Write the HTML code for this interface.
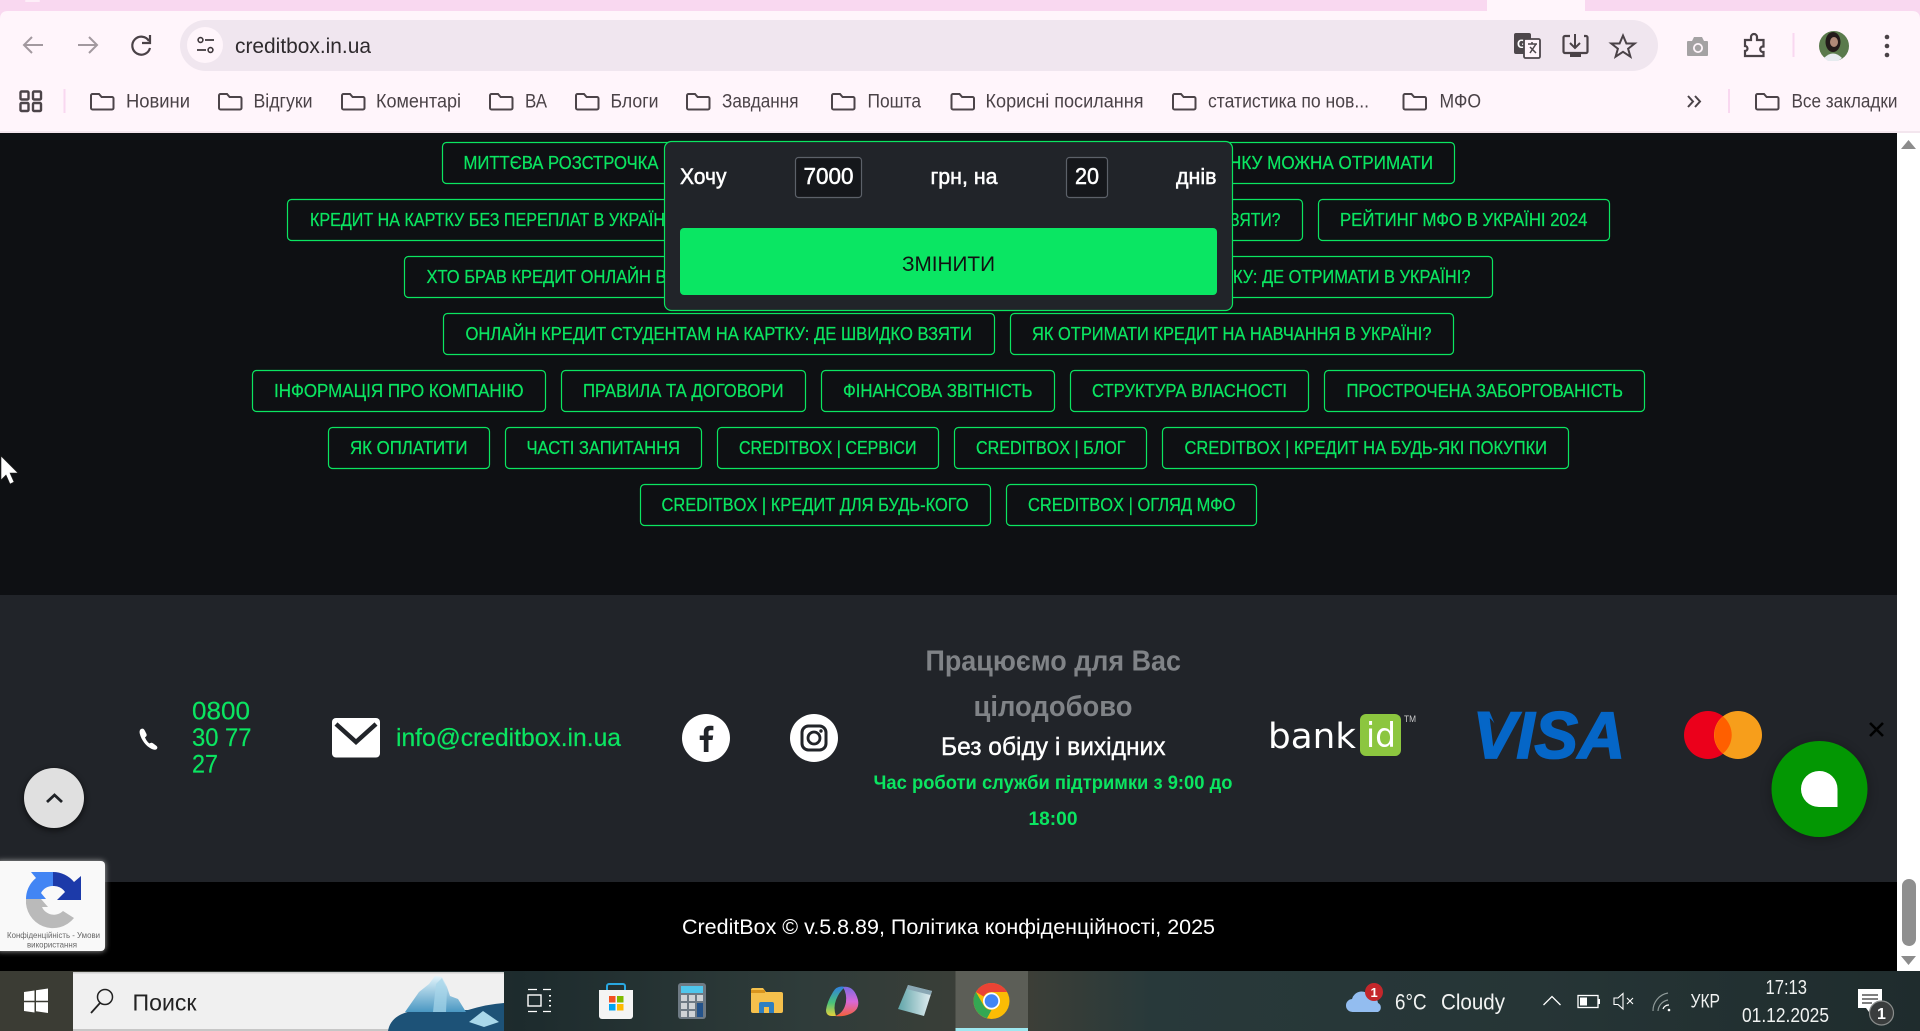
<!DOCTYPE html>
<html lang="uk"><head><meta charset="utf-8"><title>CreditBox</title>
<style>
html,body{margin:0;padding:0;width:1920px;height:1031px;overflow:hidden;background:#0e1013}
svg{display:block;position:absolute;left:0;top:0}
text{font-family:"Liberation Sans","Noto Sans CJK SC",sans-serif;white-space:pre}
.g{fill:#0be561;font-size:18px;stroke:#0be561;stroke-width:.25px}
.b{fill:#0e1013;stroke:#0be561;stroke-width:1.2px}
.m{fill:#4a4247;font-size:19px}
.w{fill:#fff}
.t{fill:#f1f3f2}
.fo{fill:none;stroke:#4c4449;stroke-width:2}
</style></head><body>
<svg width="1920" height="1031" viewBox="0 0 1920 1031" xmlns="http://www.w3.org/2000/svg">
<defs>
<path id="f" d="M2.5 1H9l2.6 3H22a1.5 1.5 0 0 1 1.5 1.5V15a1.5 1.5 0 0 1-1.5 1.5H2.5A1.5 1.5 0 0 1 1 15V2.5A1.5 1.5 0 0 1 2.5 1Z"/>
<linearGradient id="tb" x1="0" x2="1" y1="0" y2="0">
<stop offset="0" stop-color="#3b3c34"/><stop offset=".038" stop-color="#3b3c34"/><stop offset=".27" stop-color="#1d2b2d"/><stop offset=".42" stop-color="#2f3c3a"/><stop offset=".53" stop-color="#3e3f37"/><stop offset=".6" stop-color="#28393a"/><stop offset=".8" stop-color="#263536"/><stop offset="1" stop-color="#1f2c2d"/>
</linearGradient>
<filter id="sh" x="-40%" y="-40%" width="180%" height="180%"><feGaussianBlur stdDeviation="5"/></filter>
<filter id="sh2" x="-40%" y="-40%" width="180%" height="180%"><feGaussianBlur stdDeviation="3"/></filter>
<linearGradient id="ice" x1="0" x2="0" y1="0" y2="1"><stop offset="0" stop-color="#e2f4fb"/><stop offset="1" stop-color="#4a97c2"/></linearGradient>
<linearGradient id="cl" x1="0" x2="0" y1="0" y2="1"><stop offset="0" stop-color="#2f7fe0"/><stop offset=".55" stop-color="#49c27a"/><stop offset="1" stop-color="#e6d23c"/></linearGradient>
<linearGradient id="cr" x1="0" x2="0" y1="0" y2="1"><stop offset="0" stop-color="#7a6be0"/><stop offset=".5" stop-color="#d868d8"/><stop offset="1" stop-color="#f4603a"/></linearGradient>
<linearGradient id="np" x1="0" x2="1" y1="0" y2="0"><stop offset="0" stop-color="#5fa4a8"/><stop offset="1" stop-color="#e4eef2"/></linearGradient>
</defs>

<!-- browser chrome -->
<rect width="1920" height="133" fill="#fff5fb"/>
<rect width="1920" height="11" fill="#f9d8f0"/>
<rect x="1487" y="0" width="98" height="11" fill="#fff5fb"/>
<path d="M1477 11q10 0 10-11v11ZM1595 11q-10 0-10-11v11Z" fill="#f9d8f0"/>
<path d="M0 11h8q-8 0-8 8ZM1920 11h-8q8 0 8 8Z" fill="#f9d8f0"/>
<rect x="25" y="0" width="15" height="2" rx="1" fill="#fdeef8"/>
<rect x="0" y="131" width="1920" height="2" fill="#f3e6ee"/>
<rect x="180" y="20" width="1478" height="51" rx="25.5" fill="#f0e6ef"/>
<path d="M43 45H24M32 37l-8 8 8 8" fill="none" stroke="#a2999f" stroke-width="2"/>
<path d="M78 45h19M89 37l8 8-8 8" fill="none" stroke="#a2999f" stroke-width="2"/>
<path d="M149 41a9 9 0 1 0 1 7M150 35v8h-8" fill="none" stroke="#4a4247" stroke-width="2.2"/>
<circle cx="205" cy="45" r="18" fill="#fff5fb"/>
<circle cx="200.500" cy="40" r="2.400" fill="none" stroke="#3f383c" stroke-width="1.600"/><path d="M205 40h9M197 50h9" stroke="#3f383c" stroke-width="1.800"/><circle cx="210.500" cy="50" r="2.400" fill="none" stroke="#3f383c" stroke-width="1.600"/>
<text x="235" y="53" font-size="21" fill="#2e2a2d" textLength="136" lengthAdjust="spacingAndGlyphs">creditbox.in.ua</text>
<!-- right omnibox icons -->
<rect x="1514" y="33" width="17" height="21" rx="2" fill="#4d474b"/><text x="1517" y="48" font-size="12" font-weight="bold" fill="#fff">G</text>
<rect x="1524" y="39" width="16" height="19" rx="1.500" fill="#fff5fb" stroke="#4d474b" stroke-width="1.800"/><path d="M1528 44h9M1532 42v2M1536 44l-6 9M1530 47l6 6" stroke="#4d474b" stroke-width="1.500" fill="none"/>
<path d="M1570 36h-5a1.500 1.500 0 0 0-1.500 1.500v14a1.500 1.500 0 0 0 1.500 1.500h21a1.500 1.500 0 0 0 1.500-1.500V37.500a1.500 1.500 0 0 0-1.500-1.500h-2" fill="none" stroke="#4a4247" stroke-width="2.200"/><path d="M1575 34v13M1570 43l5 5 5-5" fill="none" stroke="#4a4247" stroke-width="2"/><path d="M1570 53h11v4h-11Z" fill="#4a4247"/>
<path d="M1623 35.500l3.400 8h8.300l-6.600 5.200 2.300 8-7.400-4.900-7.400 4.900 2.300-8-6.600-5.200h8.300Z" fill="none" stroke="#4a4247" stroke-width="2"/>
<path d="M1688 41h4l2-4h8l2 4h3a1 1 0 0 1 1 1v13a1 1 0 0 1-1 1h-19a1 1 0 0 1-1-1V42a1 1 0 0 1 1-1Z" fill="#a4a2a3"/><circle cx="1698" cy="48" r="5" fill="#fff5fb"/><circle cx="1698" cy="48" r="3.200" fill="#a4a2a3"/>
<path d="M1745 40h6v-3a3 3 0 0 1 6 0v3h6.500v6.500h-1a2.800 2.800 0 0 0 0 5.500h1V56H1745v-5a2.500 2.500 0 0 0 0-5Z" fill="none" stroke="#4a4247" stroke-width="2.200"/>
<rect x="1792.500" y="33" width="2" height="24" fill="#f9d8f0"/>
<circle cx="1834" cy="46" r="15" fill="#5a7a4c"/><ellipse cx="1833" cy="42" rx="7.500" ry="10" fill="#231b1a"/><ellipse cx="1834" cy="42" rx="4" ry="5" fill="#b08a78"/><path d="M1824 58q9-9 18 0l-4 3h-10Z" fill="#e6ebef"/>
<circle cx="1887" cy="37" r="2.300" fill="#4a4247"/><circle cx="1887" cy="46" r="2.300" fill="#4a4247"/><circle cx="1887" cy="55" r="2.300" fill="#4a4247"/>
<!-- bookmarks -->
<g fill="none" stroke="#4c4449" stroke-width="2.400"><rect x="20.500" y="91.500" width="8" height="8" rx="1"/><rect x="33" y="91.500" width="8" height="8" rx="1"/><rect x="20.500" y="103" width="8" height="8" rx="1"/><rect x="33" y="103" width="8" height="8" rx="1"/></g>
<rect x="63.500" y="89" width="2" height="24" fill="#f9d8f0"/><rect x="1728" y="89" width="2" height="24" fill="#f9d8f0"/>
<use href="#f" x="90" y="93" class="fo"/><use href="#f" x="218" y="93" class="fo"/><use href="#f" x="341" y="93" class="fo"/><use href="#f" x="489" y="93" class="fo"/><use href="#f" x="575" y="93" class="fo"/><use href="#f" x="686" y="93" class="fo"/><use href="#f" x="831" y="93" class="fo"/><use href="#f" x="950.500" y="93" class="fo"/><use href="#f" x="1172" y="93" class="fo"/><use href="#f" x="1402.500" y="93" class="fo"/><use href="#f" x="1755" y="93" class="fo"/>
<text class="m" x="126" y="107.500" textLength="64" lengthAdjust="spacingAndGlyphs">Новини</text>
<text class="m" x="253.500" y="107.500" textLength="59" lengthAdjust="spacingAndGlyphs">Відгуки</text>
<text class="m" x="376" y="107.500" textLength="85" lengthAdjust="spacingAndGlyphs">Коментарі</text>
<text class="m" x="525" y="107.500" textLength="22" lengthAdjust="spacingAndGlyphs">ВА</text>
<text class="m" x="610.500" y="107.500" textLength="48" lengthAdjust="spacingAndGlyphs">Блоги</text>
<text class="m" x="722" y="107.500" textLength="76.500" lengthAdjust="spacingAndGlyphs">Завдання</text>
<text class="m" x="867.500" y="107.500" textLength="53.500" lengthAdjust="spacingAndGlyphs">Пошта</text>
<text class="m" x="985.500" y="107.500" textLength="158" lengthAdjust="spacingAndGlyphs">Корисні посилання</text>
<text class="m" x="1208" y="107.500" textLength="161" lengthAdjust="spacingAndGlyphs">статистика по нов...</text>
<text class="m" x="1439.500" y="107.500" textLength="41.500" lengthAdjust="spacingAndGlyphs">МФО</text>
<text class="m" x="1791.500" y="107.500" textLength="106" lengthAdjust="spacingAndGlyphs">Все закладки</text>
<path d="M1688 96l5 5.500-5 5.500M1695 96l5 5.500-5 5.500" fill="none" stroke="#4a4247" stroke-width="2"/>

<!-- page -->
<rect x="0" y="133" width="1897" height="462" fill="#0e1013"/>
<rect x="1897" y="133" width="23" height="838" fill="#fff"/>
<path d="M1908.500 140l7.500 9h-15Z" fill="#8c8c8c"/>
<rect x="1902" y="879" width="14" height="67" rx="7" fill="#8f8f8f"/>
<path d="M1901 956h15l-7.500 9Z" fill="#8c8c8c"/>

<!-- tag buttons -->
<rect class="b" x="442.500" y="142.500" width="300" height="41" rx="4"/>
<rect class="b" x="1100" y="142.500" width="354.500" height="41" rx="4"/>
<rect class="b" x="287.500" y="199.500" width="500" height="41" rx="4"/>
<rect class="b" x="1100" y="199.500" width="202.500" height="41" rx="4"/>
<rect class="b" x="1318.500" y="199.500" width="291" height="41" rx="4"/>
<rect class="b" x="404.500" y="256.500" width="500" height="41" rx="4"/>
<rect class="b" x="1100" y="256.500" width="392.500" height="41" rx="4"/>
<rect class="b" x="443.500" y="313.500" width="551" height="41" rx="4"/>
<rect class="b" x="1010.500" y="313.500" width="443" height="41" rx="4"/>
<rect class="b" x="252.500" y="370.500" width="293" height="41" rx="4"/>
<rect class="b" x="561.500" y="370.500" width="244" height="41" rx="4"/>
<rect class="b" x="821.500" y="370.500" width="233" height="41" rx="4"/>
<rect class="b" x="1070.500" y="370.500" width="238" height="41" rx="4"/>
<rect class="b" x="1324.500" y="370.500" width="320" height="41" rx="4"/>
<rect class="b" x="328.500" y="427.500" width="161" height="41" rx="4"/>
<rect class="b" x="505.500" y="427.500" width="196" height="41" rx="4"/>
<rect class="b" x="717.500" y="427.500" width="221" height="41" rx="4"/>
<rect class="b" x="954.500" y="427.500" width="192" height="41" rx="4"/>
<rect class="b" x="1162.500" y="427.500" width="406" height="41" rx="4"/>
<rect class="b" x="640.500" y="484.500" width="350" height="41" rx="4"/>
<rect class="b" x="1006.500" y="484.500" width="250" height="41" rx="4"/>

<text class="g" x="463.500" y="169" textLength="195" lengthAdjust="spacingAndGlyphs">МИТТЄВА РОЗСТРОЧКА</text>
<text class="g" x="664" y="169">О</text>
<text class="g" x="1229" y="169" textLength="204" lengthAdjust="spacingAndGlyphs">НКУ МОЖНА ОТРИМАТИ</text>
<text class="g" x="310" y="226" textLength="355" lengthAdjust="spacingAndGlyphs">КРЕДИТ НА КАРТКУ БЕЗ ПЕРЕПЛАТ В УКРАЇН</text>
<text class="g" x="1230" y="226" textLength="50.500" lengthAdjust="spacingAndGlyphs">ЗЯТИ?</text>
<text class="g" x="1340" y="226" textLength="247.500" lengthAdjust="spacingAndGlyphs">РЕЙТИНГ МФО В УКРАЇНІ 2024</text>
<text class="g" x="426.500" y="283" textLength="240" lengthAdjust="spacingAndGlyphs">ХТО БРАВ КРЕДИТ ОНЛАЙН В</text>
<text class="g" x="1233" y="283" textLength="237.500" lengthAdjust="spacingAndGlyphs">КУ: ДЕ ОТРИМАТИ В УКРАЇНІ?</text>
<text class="g" x="465.500" y="340" textLength="506.500" lengthAdjust="spacingAndGlyphs">ОНЛАЙН КРЕДИТ СТУДЕНТАМ НА КАРТКУ: ДЕ ШВИДКО ВЗЯТИ</text>
<text class="g" x="1032" y="340" textLength="399.500" lengthAdjust="spacingAndGlyphs">ЯК ОТРИМАТИ КРЕДИТ НА НАВЧАННЯ В УКРАЇНІ?</text>
<text class="g" x="274" y="397" textLength="249.500" lengthAdjust="spacingAndGlyphs">ІНФОРМАЦІЯ ПРО КОМПАНІЮ</text>
<text class="g" x="583" y="397" textLength="200.500" lengthAdjust="spacingAndGlyphs">ПРАВИЛА ТА ДОГОВОРИ</text>
<text class="g" x="843" y="397" textLength="189.500" lengthAdjust="spacingAndGlyphs">ФІНАНСОВА ЗВІТНІСТЬ</text>
<text class="g" x="1092" y="397" textLength="195" lengthAdjust="spacingAndGlyphs">СТРУКТУРА ВЛАСНОСТІ</text>
<text class="g" x="1346.500" y="397" textLength="276.500" lengthAdjust="spacingAndGlyphs">ПРОСТРОЧЕНА ЗАБОРГОВАНІСТЬ</text>
<text class="g" x="350" y="454" textLength="117.500" lengthAdjust="spacingAndGlyphs">ЯК ОПЛАТИТИ</text>
<text class="g" x="526.500" y="454" textLength="153.500" lengthAdjust="spacingAndGlyphs">ЧАСТІ ЗАПИТАННЯ</text>
<text class="g" x="739" y="454" textLength="177.500" lengthAdjust="spacingAndGlyphs">CREDITBOX | СЕРВІСИ</text>
<text class="g" x="976" y="454" textLength="149.500" lengthAdjust="spacingAndGlyphs">CREDITBOX | БЛОГ</text>
<text class="g" x="1184.500" y="454" textLength="362.500" lengthAdjust="spacingAndGlyphs">CREDITBOX | КРЕДИТ НА БУДЬ-ЯКІ ПОКУПКИ</text>
<text class="g" x="661.500" y="511" textLength="307" lengthAdjust="spacingAndGlyphs">CREDITBOX | КРЕДИТ ДЛЯ БУДЬ-КОГО</text>
<text class="g" x="1028" y="511" textLength="207.500" lengthAdjust="spacingAndGlyphs">CREDITBOX | ОГЛЯД МФО</text>

<!-- modal -->
<rect x="664.500" y="141.500" width="568" height="169" rx="7" fill="#212429" stroke="#0be561" stroke-width="1.200"/>
<text class="w" x="680" y="184" font-size="22" stroke="#fff" stroke-width=".5" textLength="46.500" lengthAdjust="spacingAndGlyphs">Хочу</text>
<rect x="795.500" y="157.500" width="66" height="40" rx="3" fill="#15171b" stroke="#5c6169" stroke-width="1.200"/>
<text class="w" x="803.500" y="184" font-size="23" stroke="#fff" stroke-width=".5" textLength="50" lengthAdjust="spacingAndGlyphs">7000</text>
<text class="w" x="930.500" y="184" font-size="22" stroke="#fff" stroke-width=".5" textLength="67" lengthAdjust="spacingAndGlyphs">грн, на</text>
<rect x="1066.500" y="157.500" width="41" height="40" rx="3" fill="#15171b" stroke="#5c6169" stroke-width="1.200"/>
<text class="w" x="1075" y="184" font-size="23" stroke="#fff" stroke-width=".5" textLength="24" lengthAdjust="spacingAndGlyphs">20</text>
<text class="w" x="1176" y="184" font-size="22" stroke="#fff" stroke-width=".5" textLength="40.500" lengthAdjust="spacingAndGlyphs">днів</text>
<rect x="680" y="228" width="537" height="67" rx="4" fill="#0ae663"/>
<text x="902" y="271" font-size="21" fill="#111" textLength="93" lengthAdjust="spacingAndGlyphs">ЗМІНИТИ</text>

<!-- cursor -->
<path d="M1 456l17 17h-8l4 9-4 2-4-9-5 5Z" fill="#fff" stroke="#222" stroke-width=".6"/>

<!-- footer -->
<rect x="0" y="595" width="1897" height="287" fill="#212429"/>
<rect x="0" y="882" width="1897" height="89" fill="#000"/>
<path d="M141 729c2-1 3 0 4 2l1.500 3c.5 1.500 0 2.500-1.500 3.200 1 2.800 2.500 4.800 4.500 6.300 1.500-1 2.700-1 3.800 0l3 2.300c1.200 1 1.500 2.200.5 3.200-1.500 1.200-3.500 .8-5.500-.2-5.500-2.800-10-9-11.500-15-.4-2-.4-4 1.700-5Z" fill="#fff"/>
<text x="192" y="719.500" font-size="25" stroke="#0be561" stroke-width=".2" fill="#0be561" textLength="58" lengthAdjust="spacingAndGlyphs">0800</text>
<text x="192" y="746" font-size="25" stroke="#0be561" stroke-width=".2" fill="#0be561" textLength="59.500" lengthAdjust="spacingAndGlyphs">30 77</text>
<text x="192" y="772.500" font-size="25" stroke="#0be561" stroke-width=".2" fill="#0be561" textLength="26" lengthAdjust="spacingAndGlyphs">27</text>
<rect x="332" y="718" width="48" height="39.500" rx="4" fill="#fff"/><path d="M336 724l20 18 20-18" fill="none" stroke="#212429" stroke-width="4.500"/>
<text x="396" y="746" font-size="25" stroke="#0be561" stroke-width=".2" fill="#0be561" textLength="225" lengthAdjust="spacingAndGlyphs">info@creditbox.in.ua</text>
<circle cx="706" cy="738" r="24" fill="#fff"/>
<path d="M708.500 752v-12h4l.7-4.500h-4.700v-3c0-1.500.5-2.300 2.400-2.300h2.500v-4.300c-1-.1-2.300-.2-3.600-.2-3.600 0-6 2.200-6 6.100v3.700h-4.100v4.500h4.100v12Z" fill="#212429"/>
<circle cx="814" cy="738" r="24" fill="#fff"/>
<rect x="802" y="726" width="24" height="24" rx="6.500" fill="none" stroke="#212429" stroke-width="3"/><circle cx="814" cy="738" r="6" fill="none" stroke="#212429" stroke-width="2.800"/><circle cx="821" cy="731" r="1.700" fill="#212429"/>

<text x="925.500" y="670.700" font-size="29" font-weight="bold" fill="#808387" textLength="255.500" lengthAdjust="spacingAndGlyphs">Працюємо для Вас</text>
<text x="973.500" y="716" font-size="29" font-weight="bold" fill="#808387" textLength="159" lengthAdjust="spacingAndGlyphs">цілодобово</text>
<text class="w" x="941" y="755" font-size="25" stroke="#fff" stroke-width=".4" textLength="224.500" lengthAdjust="spacingAndGlyphs">Без обіду і вихідних</text>
<text x="873.500" y="789" font-size="19" font-weight="bold" fill="#0be561" textLength="359" lengthAdjust="spacingAndGlyphs">Час роботи служби підтримки з 9:00 до</text>
<text x="1028.500" y="825" font-size="19" font-weight="bold" fill="#0be561" textLength="49" lengthAdjust="spacingAndGlyphs">18:00</text>

<!-- bank id -->
<text class="w" x="1268" y="748" style='font-family:"DejaVu Sans",sans-serif' font-size="35" textLength="88" lengthAdjust="spacingAndGlyphs">bank</text>
<rect x="1360" y="714" width="41" height="42" rx="6" fill="#8cc63f"/>
<text class="w" x="1366" y="747" style='font-family:"DejaVu Sans",sans-serif' font-size="34" textLength="30" lengthAdjust="spacingAndGlyphs">id</text>
<text x="1404" y="722" font-size="9" fill="#ccc" textLength="12" lengthAdjust="spacingAndGlyphs">TM</text>
<!-- visa -->
<text x="1473" y="758" font-size="66" font-weight="bold" font-style="italic" fill="#0566c7" stroke="#0566c7" stroke-width="1.800" textLength="152" lengthAdjust="spacingAndGlyphs">VISA</text>
<path d="M1476.500 711.500h13l5 12q-6-9-18-12Z" fill="#0566c7"/>
<!-- mastercard -->
<circle cx="1708" cy="735" r="24" fill="#eb001b"/><circle cx="1738" cy="735" r="24" fill="#f79e1b"/>
<path d="M1723 716.500a24 24 0 0 1 0 37 24 24 0 0 1 0-37Z" fill="#ff5f00"/>
<!-- chat -->
<path d="M1870 723l13 13M1883 723l-13 13" stroke="#000" stroke-width="2.600"/>
<circle cx="1819.500" cy="791" r="50" fill="#000" opacity=".22" filter="url(#sh)"/>
<circle cx="1819.500" cy="789" r="48" fill="#039703"/>
<path d="M1819 771a18 18 0 0 1 18.500 18v18H1819a18 18 0 0 1 0-36Z" fill="#fff"/>
<!-- up -->
<circle cx="54" cy="800" r="31" fill="#000" opacity=".5" filter="url(#sh2)"/>
<circle cx="54" cy="798" r="30" fill="#e0e0e0"/>
<path d="M47 802l7.500-7 7.500 7" fill="none" stroke="#1f2226" stroke-width="2.800"/>
<!-- recaptcha -->
<rect x="-4" y="861" width="109" height="90" rx="4" fill="#aaa" filter="url(#sh2)"/>
<rect x="-4" y="861" width="109" height="90" rx="4" fill="#f9f9f9"/>
<path d="M26 899A27 27 0 0 1 36 878L31 872H53V886A13 13 0 0 0 41 893L46 899Z" fill="#4285f4"/>
<path d="M53 872A27 27 0 0 1 74 882L81 876V900H57L65 892A13 13 0 0 0 53 886Z" fill="#1c3aa9"/>
<path d="M26 899H41L48 907H42A13 13 0 0 0 63 911L74 918A27 27 0 0 1 26 899Z" fill="#bababa"/>
<text x="7" y="938" font-size="8.500" fill="#666" textLength="93" lengthAdjust="spacingAndGlyphs">Конфіденційність - Умови</text>
<text x="27" y="947.500" font-size="8.500" fill="#666" textLength="50" lengthAdjust="spacingAndGlyphs">використання</text>
<text class="w" x="682" y="934" font-size="21" textLength="533" lengthAdjust="spacingAndGlyphs">CreditBox © v.5.8.89, Політика конфіденційності, 2025</text>

<!-- taskbar -->
<rect x="0" y="971" width="1920" height="60" fill="url(#tb)"/>
<path d="M24 992l10.500-1.500v10.300H24ZM36 990.200l12-1.700v12.300H36ZM24 1002.300h10.500v10.200L24 1011ZM36 1002.300h12V1013l-12-1.700Z" fill="#fff"/>
<rect x="73" y="972" width="431" height="59" fill="#f0f0f0"/>
<rect x="73" y="972" width="431" height="1.500" fill="#cfcfcf"/><rect x="73" y="1029" width="431" height="2" fill="#c6c6c6"/>
<circle cx="105" cy="997" r="7.500" fill="none" stroke="#222" stroke-width="1.500"/><path d="M100 1003l-9 10" stroke="#222" stroke-width="1.800"/>
<text x="132.500" y="1010.500" font-size="23" fill="#222" textLength="64" lengthAdjust="spacingAndGlyphs">Поиск</text>
<!-- iceberg -->
<path d="M388 1031q3-18 30-21h50q20-6 36-7v28Z" fill="#1d5277"/>
<path d="M405 1012l14-20 10-8 6-8 7 1 5 10 3 9 8 3 8 13Z" fill="url(#ice)"/>
<path d="M433 1012l3-28 6-6 5 12-1 22Z" fill="#a7d6ea" opacity=".7"/>
<path d="M469 1022l14-11 16 11-15 5Z" fill="#a9d8ea"/>
<!-- task view -->
<path d="M528 989.500h9M528 1011.500h9M543 989.500h8M543 1011.500h8" stroke="#fff" stroke-width="1.300"/><rect x="528" y="995" width="13" height="11" fill="none" stroke="#fff" stroke-width="1.400"/><path d="M550 995v1.500M550 1000v1.500M550 1005v1.500" stroke="#fff" stroke-width="2"/>
<!-- store -->
<path d="M599 990h34v26a3 3 0 0 1-3 3h-28a3 3 0 0 1-3-3Z" fill="#f4f4f4"/><path d="M607 990v-4a2 2 0 0 1 2-2h14a2 2 0 0 1 2 2v4" fill="none" stroke="#29a7e0" stroke-width="2"/>
<rect x="609" y="996" width="6.500" height="6.500" fill="#f25022"/><rect x="617" y="996" width="6.500" height="6.500" fill="#7fba00"/><rect x="609" y="1004" width="6.500" height="6.500" fill="#00a4ef"/><rect x="617" y="1004" width="6.500" height="6.500" fill="#ffb900"/>
<!-- calc -->
<rect x="678" y="983" width="28" height="36" rx="3" fill="#6e7a84"/><rect x="681" y="986" width="22" height="7" fill="#4fc6ec"/>
<g fill="#cfd3d6"><rect x="681" y="995" width="6" height="6"/><rect x="689" y="995" width="6" height="6"/><rect x="697" y="995" width="6" height="6"/><rect x="681" y="1003" width="6" height="6"/><rect x="689" y="1003" width="6" height="6"/><rect x="681" y="1011" width="6" height="6"/><rect x="689" y="1011" width="6" height="6"/></g><rect x="697" y="1003" width="6" height="14" fill="#24538a"/>
<!-- explorer -->
<path d="M751 990a2 2 0 0 1 2-2h10l3 4h15a2 2 0 0 1 2 2v17a2 2 0 0 1-2 2h-28a2 2 0 0 1-2-2Z" fill="#f5c04c"/><path d="M751 990h14v3h-14Z" fill="#d9951e"/><path d="M759 1013v-9a2 2 0 0 1 2-2h11a2 2 0 0 1 2 2v9h-5v-6h-5v6Z" fill="#2f7fc1"/>
<!-- copilot -->
<path d="M845 987q-8-2-12 5-6 10-7 18 0 6 6 6h4q-3-8 0-16 3-8 9-13Z" fill="url(#cl)"/>
<path d="M843 987q11-2 15 13 2 10-8 14-7 3-15 2 9-3 11-14 1-8-3-15Z" fill="url(#cr)"/>
<!-- notepad -->
<path d="M908 985l24 6-8 25-26-7Z" fill="url(#np)"/><path d="M908 985l24 6-1.500 4-24-6Z" fill="#8aa7b4"/>
<!-- chrome -->
<rect x="955.500" y="971" width="72.500" height="60" fill="#5c5e57"/>
<rect x="955.500" y="1028" width="72.500" height="3" fill="#9ee8f0"/>
<circle cx="991.500" cy="1001" r="18" fill="#fbbc05"/>
<path d="M991.500 983a18 18 0 0 1 15.600 9h-15.600a9 9 0 0 0-7.800 4.500l-7.800-4.500A18 18 0 0 1 991.500 983Z" fill="#ea4335"/>
<path d="M975.900 992l7.800 13.500a9 9 0 0 0 7.800 4.500l-4.500 8.300A18 18 0 0 1 975.900 992Z" fill="#34a853"/>
<circle cx="991.500" cy="1001" r="8.500" fill="#fff"/><circle cx="991.500" cy="1001" r="6.800" fill="#4285f4"/>
<!-- tray -->
<path d="M1353 1012a6.500 6.500 0 0 1-1-13 10 10 0 0 1 18-3 8 8 0 0 1 8 7 5 5 0 0 1 0 9Z" fill="#93bdf0"/>
<circle cx="1374" cy="992" r="9" fill="#c4272b"/><text class="w" x="1370.500" y="997" font-size="13" font-weight="bold">1</text>
<text class="t" x="1395" y="1009.500" font-size="22" textLength="31.500" lengthAdjust="spacingAndGlyphs">6°C</text>
<text class="t" x="1441" y="1009.500" font-size="22" textLength="64" lengthAdjust="spacingAndGlyphs">Cloudy</text>
<path d="M1543.500 1005l8.500-8.500 8.500 8.500" fill="none" stroke="#fff" stroke-width="1.300"/>
<rect x="1578" y="995.500" width="20" height="12" fill="none" stroke="#fff" stroke-width="1.300"/><rect x="1580" y="997.500" width="7" height="8" fill="#fff"/><rect x="1598.500" y="999" width="1.500" height="5" fill="#fff"/>
<path d="M1614 998h4l5-4.500v15.500l-5-4.500h-4Z" fill="none" stroke="#fff" stroke-width="1.100"/><path d="M1627 998l6 6M1633 998l-6 6" stroke="#fff" stroke-width="1.100"/>
<path d="M1653 1011a18 18 0 0 1 15-18M1658 1011a12 12 0 0 1 10-11" fill="none" stroke="#8f9a99" stroke-width="1.200"/><path d="M1663 1009a6 6 0 0 1 6-4" fill="none" stroke="#fff" stroke-width="1.200"/><circle cx="1669" cy="1010" r="1.300" fill="#fff"/>
<text class="t" x="1690.500" y="1007.500" font-size="19" textLength="29.500" lengthAdjust="spacingAndGlyphs">УКР</text>
<text class="t" x="1765.500" y="994" font-size="20" textLength="41.500" lengthAdjust="spacingAndGlyphs">17:13</text>
<text class="t" x="1742" y="1022" font-size="20" textLength="87" lengthAdjust="spacingAndGlyphs">01.12.2025</text>
<path d="M1858 989h24v19h-9l-4 4-3-4h-8Z" fill="#fff"/><path d="M1862 995h16M1862 999h16M1862 1003h10" stroke="#333" stroke-width="1.200"/>
<circle cx="1881.500" cy="1013" r="12" fill="#3a3d3d" stroke="#8a8d8c" stroke-width="1.200"/><text class="w" x="1877" y="1019" font-size="16" font-weight="bold">1</text>
</svg>
</body></html>
